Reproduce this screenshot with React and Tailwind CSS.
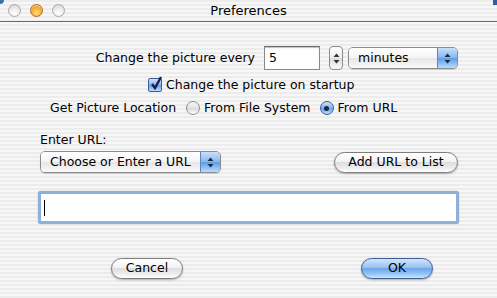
import React from "react";

const stripes =
  "bg-[repeating-linear-gradient(to_bottom,#ececec_0px,#ececec_2px,#f7f7f7_2px,#f7f7f7_4px)]";

function Light({ color }) {
  if (color === "orange")
    return (
      <div className="w-[13px] h-[13px] rounded-full border border-[#b86a14] bg-[radial-gradient(circle_at_50%_70%,#ffe28a_0%,#f7b13a_45%,#d9781a_100%)] shadow-[inset_0_1px_1px_rgba(255,255,255,0.7)]" />
    );
  return (
    <div className="w-[13px] h-[13px] rounded-full border border-[#a9a9a9] bg-[radial-gradient(circle_at_50%_75%,#ffffff_0%,#f1f1f1_40%,#cfcfcf_100%)]" />
  );
}

function UpDown({ color = "#1a2a4a" }) {
  return (
    <svg width="7" height="11" viewBox="0 0 7 11">
      <path d="M3.5 0.5 L6.5 4 L0.5 4 Z" fill={color} />
      <path d="M3.5 10.5 L6.5 7 L0.5 7 Z" fill={color} />
    </svg>
  );
}

function Popup({ label, width }) {
  return (
    <div
      className={`${width} h-[22px] flex rounded-[5px] border border-[#8c8c8c] overflow-hidden shadow-[0_1px_1px_rgba(0,0,0,0.15)]`}
    >
      <div className="flex-1 flex items-center pl-[9px] bg-[linear-gradient(to_bottom,#ffffff_0%,#f4f4f4_50%,#e6e6e6_51%,#fafafa_100%)]">
        {label}
      </div>
      <div className="w-[20px] flex items-center justify-center border-l border-[#5b86bf] bg-[linear-gradient(to_bottom,#c9e0fb_0%,#86b6ee_50%,#5e9be2_51%,#b7dcff_100%)]">
        <UpDown />
      </div>
    </div>
  );
}

function Button({ children, width, primary }) {
  const bg = primary
    ? "border-[#3d5f93] bg-[linear-gradient(to_bottom,#d3e5fb_0%,#99c1f0_45%,#6ea7ea_50%,#8dc0f5_75%,#c9e7ff_100%)]"
    : "border-[#7d7d7d] bg-[linear-gradient(to_bottom,#ffffff_0%,#f3f3f3_45%,#dedede_50%,#ebebeb_75%,#ffffff_100%)]";
  return (
    <div
      className={`${width} h-[21px] rounded-full border ${bg} flex items-center justify-center shadow-[0_1px_2px_rgba(0,0,0,0.3)]`}
    >
      {children}
    </div>
  );
}

function Radio({ checked }) {
  if (checked)
    return (
      <div className="w-[14px] h-[14px] rounded-full border border-[#3d5f93] bg-[linear-gradient(to_bottom,#cfe3fb_0%,#7fb2ee_50%,#6aa5ea_55%,#b9dcff_100%)] flex items-center justify-center">
        <div className="w-[5px] h-[5px] rounded-full bg-[#1a2540]" />
      </div>
    );
  return (
    <div className="w-[14px] h-[14px] rounded-full border border-[#8f8f8f] bg-[linear-gradient(to_bottom,#f7f7f7_0%,#e4e4e4_50%,#d9d9d9_55%,#ffffff_100%)]" />
  );
}

export default function App() {
  return (
    <div
      className={`relative w-[497px] h-[298px] overflow-hidden ${stripes} text-[12.5px] text-black`}
      style={{ fontFamily: '"Lucida Grande", "DejaVu Sans", sans-serif' }}
    >
      {/* corners */}
      <div className="absolute left-0 top-0 w-[4px] h-[4px] bg-[#3b6fb0] rounded-br-[4px]" />
      <div className="absolute right-0 top-0 w-[4px] h-[5px] bg-[#2c5fa8]" />

      {/* Title bar */}
      <div
        className={`h-[22px] grid grid-cols-[1fr_auto_1fr] items-center border-b border-[#6b6b6b] ${stripes}`}
      >
        <div className="flex items-center gap-[9px] pl-[8px]">
          <Light />
          <Light color="orange" />
          <Light />
        </div>
        <div className="text-[13px] leading-none">Preferences</div>
        <div />
      </div>

      {/* Body */}
      <div className="flex flex-col pl-[40px] pr-[39px]">
        {/* Row 1 */}
        <div className="mt-[24px] h-[24px] flex items-center justify-end">
          <span>Change the picture every</span>
          <div className="ml-[9px] w-[56px] h-[24px] border border-[#8a8a8a] border-t-[#6a6a6a] bg-white shadow-[inset_0_1px_1px_rgba(0,0,0,0.25)] flex items-center pl-[4px]">
            5
          </div>
          <div className="ml-[9px] w-[14px] h-[24px] rounded-[4px] border border-[#8c8c8c] bg-[linear-gradient(to_bottom,#ffffff_0%,#eeeeee_50%,#dddddd_51%,#fafafa_100%)] flex items-center justify-center">
            <UpDown color="#333" />
          </div>
          <div className="ml-[5px]">
            <Popup label="minutes" width="w-[110px]" />
          </div>
        </div>

        {/* Row 2 */}
        <div className="mt-[7px] h-[16px] flex items-center pl-[108px]">
          <div className="w-[14px] h-[14px] rounded-[2px] border border-[#3d5f93] bg-[linear-gradient(to_bottom,#cfe3fb_0%,#86b6ee_50%,#6aa5ea_55%,#b9dcff_100%)] relative">
            <svg
              className="absolute left-[1px] top-[-3px]"
              width="13"
              height="15"
              viewBox="0 0 13 15"
            >
              <path
                d="M2 8 L5 12 L11 1"
                fill="none"
                stroke="#16204a"
                strokeWidth="2.4"
                strokeLinejoin="miter"
              />
            </svg>
          </div>
          <span className="ml-[4px]">Change the picture on startup</span>
        </div>

        {/* Row 3 */}
        <div className="mt-[7px] h-[16px] flex items-center pl-[10px]">
          <span>Get Picture Location</span>
          <div className="ml-[10px]">
            <Radio />
          </div>
          <span className="ml-[4px]">From File System</span>
          <div className="ml-[9px]">
            <Radio checked />
          </div>
          <span className="ml-[4px]">From URL</span>
        </div>

        {/* Enter URL label */}
        <div className="mt-[16px] h-[16px] flex items-center">Enter URL:</div>

        {/* Row 5 */}
        <div className="mt-[3px] flex items-center justify-between">
          <Popup label="Choose or Enter a URL" width="w-[181px]" />
          <Button width="w-[124px]">Add URL to List</Button>
        </div>

        {/* Text field */}
        <div className="mt-[18px] -ml-[2px] -mr-[1px] h-[33px] rounded-[3px] border-[3px] border-[#8fb0d8] bg-white shadow-[0_0_1px_#6f95c7] flex items-center pl-[3px]">
          <div className="w-[1px] h-[16px] bg-black" />
        </div>

        {/* Buttons */}
        <div className="mt-[34px] flex items-center pl-[71px]">
          <Button width="w-[72px]">Cancel</Button>
          <div className="ml-[178px]">
            <Button width="w-[72px]" primary>
              OK
            </Button>
          </div>
        </div>
      </div>
    </div>
  );
}
